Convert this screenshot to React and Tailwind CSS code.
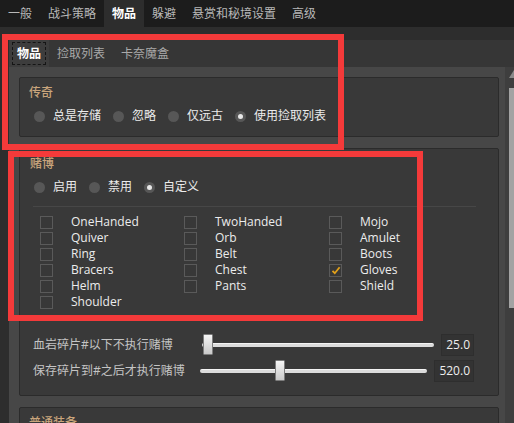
import React from "react";

function Radio({ label, checked }) {
  return (
    <div className="flex items-center">
      <div className="w-[11px] h-[11px] rounded-full bg-[#575757] flex items-center justify-center">
        {checked && <div className="w-[5px] h-[5px] rounded-full bg-[#e8e8e8]" />}
      </div>
      <span className="ml-[8px] text-[12px] leading-[16px] text-[#ececec]">{label}</span>
    </div>
  );
}

function Check({ label, checked }) {
  return (
    <div className="flex items-center h-[16px]">
      <div className="w-[13px] h-[13px] border border-[#5a5a5a] bg-[#383838] flex items-center justify-center">
        {checked && (
          <svg width="10" height="9" viewBox="0 0 10 9">
            <path d="M1.5 4.8 L3.8 7.2 L8.6 1.3" fill="none" stroke="#e3a21a" strokeWidth="1.8" />
          </svg>
        )}
      </div>
      <span className="ml-[18px] text-[12px] leading-[16px] text-[#ececec]">{label}</span>
    </div>
  );
}

function Slider({ label, value, handleLeft, gap, boxW }) {
  return (
    <div className="flex items-center h-[22px] ml-[3px] mr-[14px]">
      <span className="text-[12px] leading-[16px] text-[#c4c4c4] whitespace-nowrap">{label}</span>
      <div className={`relative flex-1 h-[22px] ${gap}`}>
        <div className="absolute left-0 right-0 top-[9px] h-[4px] rounded-[2px] bg-[#dcdcdc] border-t border-[#f4f4f4]" />
        <div
          className={`absolute top-0 ${handleLeft} w-[10px] h-[21px] rounded-[1px] border border-[#7d7d7d] bg-gradient-to-b from-[#f6f6f6] to-[#c9c9c9]`}
        />
      </div>
      <div
        className={`ml-[7px] ${boxW} h-[22px] bg-[#333333] border border-[#2e2e2e] flex items-center justify-end pr-[3px] text-[12px] text-[#eeeeee]`}
      >
        {value}
      </div>
    </div>
  );
}

export default function App() {
  const topTabs = ["一般", "战斗策略", "物品", "躲避", "悬赏和秘境设置", "高级"];
  const items = [
    ["OneHanded", false], ["TwoHanded", false], ["Mojo", false],
    ["Quiver", false], ["Orb", false], ["Amulet", false],
    ["Ring", false], ["Belt", false], ["Boots", false],
    ["Bracers", false], ["Chest", false], ["Gloves", true],
    ["Helm", false], ["Pants", false], ["Shield", false],
    ["Shoulder", false],
  ];
  return (
    <div className="relative w-[514px] h-[423px] overflow-hidden bg-[#2d2d2d] font-['Open_Sans','Noto_Sans_CJK_SC',sans-serif] select-none">
      {/* top tabs */}
      <div className="flex h-[27px] bg-[#1c1c1c]">
        {topTabs.map((t) => {
          const a = t === "物品";
          return (
            <div
              key={t}
              className={`px-[8px] h-full flex items-center text-[12px] leading-[16px] ${
                a ? "bg-[#2d2d2d] text-white font-bold" : "text-[#b8b8b8]"
              }`}
            >
              {t}
            </div>
          );
        })}
      </div>

      <div className="flex flex-col pt-[13px] pl-[9px] h-[396px]">
        {/* inner tabs */}
        <div className="flex h-[27px] bg-[#363636]">
          {["物品", "捡取列表", "卡奈魔盒"].map((t, i) => (
            <div
              key={t}
              className={`relative px-[8px] h-full flex items-center text-[12px] leading-[16px] ${
                i === 0 ? "bg-[#3d3d3d] text-white font-bold" : "text-[#a9a9a9]"
              }`}
            >
              {i === 0 && (
                <div className="absolute left-[3px] right-[3px] top-[2px] bottom-[2px] border border-dashed border-[#151515]" />
              )}
              {t}
            </div>
          ))}
        </div>

        <div className="flex flex-1 min-h-0">
          <div className="flex-1 bg-[#474747] pl-[10px] pr-[6px] pt-[10px] flex flex-col gap-[11px] overflow-hidden">
            {/* 传奇 */}
            <div className="border border-[#2b2b2b] rounded-[2px] bg-[#393939] px-[9px] pb-[11px]">
              <div className="h-[29px] flex items-center text-[12px] text-[#c9a57c] font-medium">传奇</div>
              <div className="h-[18px] flex items-center gap-[12px] ml-[5px]">
                <Radio label="总是存储" />
                <Radio label="忽略" />
                <Radio label="仅远古" />
                <Radio label="使用捡取列表" checked />
              </div>
            </div>

            {/* 赌博 */}
            <div className="border border-[#2b2b2b] rounded-[2px] bg-[#393939] px-[10px] pb-[13px] shrink-0">
              <div className="h-[29px] flex items-center text-[12px] text-[#c9a57c] font-medium">赌博</div>
              <div className="h-[18px] flex items-center gap-[12px] ml-[4px]">
                <Radio label="启用" />
                <Radio label="禁用" />
                <Radio label="自定义" checked />
              </div>
              <div className="mt-[10px] h-px bg-[#474747] ml-[3px] mr-[12px]" />
              <div className="mt-[7px] ml-[10px] grid grid-cols-[144px_145px_1fr]">
                {items.map(([l, c]) => (
                  <Check key={l} label={l} checked={c} />
                ))}
              </div>
              <div className="mt-[24px] flex flex-col gap-[4px]">
                <Slider label="血岩碎片#以下不执行赌博" value="25.0" handleLeft="left-[1px]" gap="ml-[29px]" boxW="w-[33px]" />
                <Slider label="保存碎片到#之后才执行赌博" value="520.0" handleLeft="left-[75px]" gap="ml-[15px]" boxW="w-[40px]" />
              </div>
            </div>

            {/* 普通装备 */}
            <div className="border border-[#2b2b2b] rounded-[2px] bg-[#393939] px-[9px] h-[60px] shrink-0">
              <div className="h-[29px] flex items-center text-[12px] text-[#c9a57c] font-medium">普通装备</div>
            </div>
          </div>

          {/* scrollbar */}
          <div className="w-[9px] bg-[#3e3e3e] flex flex-col items-end">
            <div className="w-[5px] h-[8px] mt-[3px]">
              <svg width="5" height="8" viewBox="0 0 5 8">
                <path d="M5 0 L5 8 L0 8 Z" fill="#8a8a8a" />
              </svg>
            </div>
            <div className="w-[5px] h-[220px] mt-[10px] bg-[#a3a3a3]" />
          </div>
        </div>
      </div>

      {/* annotation rectangles */}
      <div className="absolute left-[2px] top-[34px] w-[342px] h-[116px] border-[6px] border-[#f43a3a] pointer-events-none" />
      <div className="absolute left-[8px] top-[151px] w-[415px] h-[170px] border-[6px] border-[#f43a3a] pointer-events-none" />
    </div>
  );
}
